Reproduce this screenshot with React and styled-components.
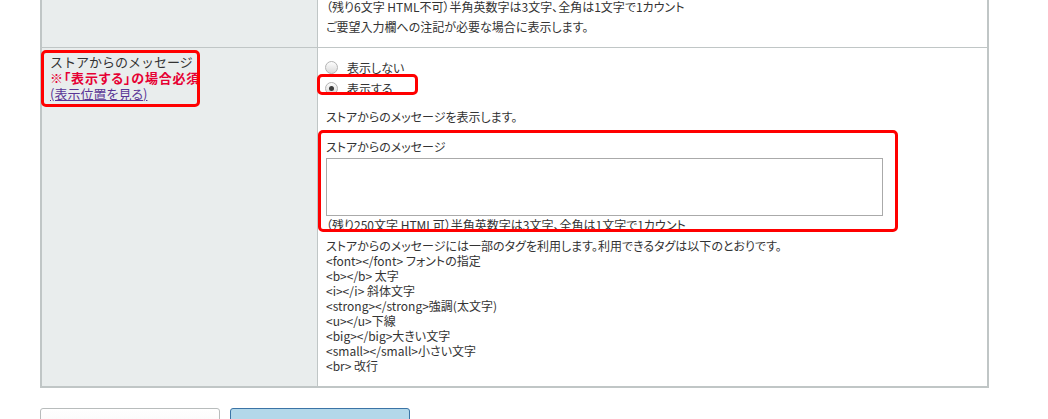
import React from "react";
import styled, { createGlobalStyle } from "styled-components";

const GlobalStyle = createGlobalStyle`
  html, body {
    margin: 0;
    padding: 0;
    background: #ffffff;
  }
  body {
    font-family: "Noto Sans CJK JP", "Noto Sans", sans-serif;
    font-feature-settings: "palt";
    color: #333333;
    font-size: 12px;
    overflow: hidden;
  }
`;

const tags = [
  "<font></font> フォントの指定",
  "<b></b> 太字",
  "<i></i> 斜体文字",
  "<strong></strong>強調(太文字)",
  "<u></u>下線",
  "<big></big>大きい文字",
  "<small></small>小さい文字",
  "<br> 改行",
];

const App = () => {
  return (
    <Page>
      <GlobalStyle />
      <Table>
        <Row>
          <HeadCell />
          <BodyCell first>
            <Note>（残り6文字 HTML不可）半角英数字は3文字、全角は1文字で1カウント</Note>
            <Note gap={8}>ご要望入力欄への注記が必要な場合に表示します。</Note>
          </BodyCell>
        </Row>
        <Row last>
          <HeadCell>
            <Marked width={150} inset="-4px 0 -5px -9px">
              <Label>ストアからのメッセージ</Label>
              <Required>※「表示する」の場合必須</Required>
              <Link href="#">(表示位置を見る)</Link>
            </Marked>
          </HeadCell>
          <BodyCell>
            <RadioList>
              <RadioRow>
                <Radio />
                <span>表示しない</span>
              </RadioRow>
              <Marked width={92} inset="-4px 0 4px -9px">
                <RadioRow>
                  <Radio checked />
                  <span>表示する</span>
                </RadioRow>
              </Marked>
            </RadioList>
            <Text gap={10}>ストアからのメッセージを表示します。</Text>
            <Marked width={557} inset="-9px -15px 1px -8px" gap={14}>
              <Text>ストアからのメッセージ</Text>
              <TextArea />
              <Text>（残り250文字 HTML可）半角英数字は3文字、全角は1文字で1カウント</Text>
            </Marked>
            <TagList>
              <li>ストアからのメッセージには一部のタグを利用します。利用できるタグは以下のとおりです。</li>
              {tags.map((t, i) => (
                <li key={i}>{t}</li>
              ))}
            </TagList>
          </BodyCell>
        </Row>
      </Table>
      <Buttons>
        <Button />
        <Button primary />
      </Buttons>
    </Page>
  );
};

export default App;

const Page = styled.div`
  padding-left: 40px;
`;

const Table = styled.div`
  width: 949px;
  box-sizing: border-box;
  border: 2px solid #c0c6c6;
  border-top: none;
`;

const Row = styled.div`
  display: grid;
  grid-template-columns: 276px 1fr;
  border-bottom: ${(p) => (p.last ? "none" : "1px solid #c0c6c6")};
`;

const HeadCell = styled.div`
  background: #e9eded;
  border-right: 1px solid #c0c6c6;
  padding: 6px 8px 0 8px;
`;

const BodyCell = styled.div`
  padding: ${(p) => (p.first ? "1px 8px 14px 8px" : "0 8px 13px 8px")};
  background: #ffffff;
`;

const Note = styled.p`
  margin: ${(p) => p.gap || 0}px 0 0 0;
  line-height: 12px;
  white-space: nowrap;
`;

const Text = styled.p`
  margin: ${(p) => p.gap || 0}px 0 0 0;
  line-height: 16px;
  white-space: nowrap;
`;

const Marked = styled.div`
  position: relative;
  width: ${(p) => p.width}px;
  margin-top: ${(p) => p.gap || 0}px;
  &::after {
    content: "";
    position: absolute;
    inset: ${(p) => p.inset};
    border: 3px solid #ff0000;
    border-radius: 5px;
    pointer-events: none;
  }
`;

const Label = styled.div`
  font-size: 13px;
  line-height: 16px;
  color: #333333;
  font-feature-settings: normal;
  white-space: nowrap;
`;

const Required = styled.div`
  font-size: 13px;
  line-height: 16px;
  color: #e60033;
  font-weight: bold;
  letter-spacing: 0.8px;
  white-space: nowrap;
`;

const Link = styled.a`
  display: block;
  font-size: 13px;
  line-height: 16px;
  color: #5a3596;
  text-decoration: underline;
  white-space: nowrap;
`;

const RadioList = styled.div`
  padding-top: 9px;
`;

const RadioRow = styled.label`
  display: flex;
  align-items: center;
  height: 21px;
  line-height: 21px;
  white-space: nowrap;
`;

const Radio = styled.span`
  position: relative;
  width: 13px;
  height: 13px;
  box-sizing: border-box;
  margin-left: -1px;
  margin-right: 9px;
  border-radius: 50%;
  border: 1px solid #b4b4b4;
  background: linear-gradient(#fdfdfd, #dadada);
  flex: none;
  &::after {
    content: "";
    display: ${(p) => (p.checked ? "block" : "none")};
    position: absolute;
    left: 3px;
    top: 3px;
    width: 5px;
    height: 5px;
    border-radius: 50%;
    background: #3c3c3c;
  }
`;

const TextArea = styled.textarea`
  display: block;
  box-sizing: border-box;
  width: 557px;
  height: 58px;
  margin: 3px 0 1px 0;
  border: 1px solid #aaaaaa;
  resize: none;
  padding: 2px;
  font: inherit;
`;

const TagList = styled.ul`
  list-style: none;
  margin: 5px 0 0 0;
  padding: 0;
  line-height: 15px;
  white-space: nowrap;
`;

const Buttons = styled.div`
  display: flex;
  gap: 10px;
  margin-top: 20px;
`;

const Button = styled.button`
  width: 180px;
  height: 38px;
  border-radius: 3px;
  border: 1px solid ${(p) => (p.primary ? "#3b74a6" : "#b8bcbc")};
  background: ${(p) =>
    p.primary ? "#b3d8ea" : "linear-gradient(#ffffff, #f3f3f3)"};
`;
